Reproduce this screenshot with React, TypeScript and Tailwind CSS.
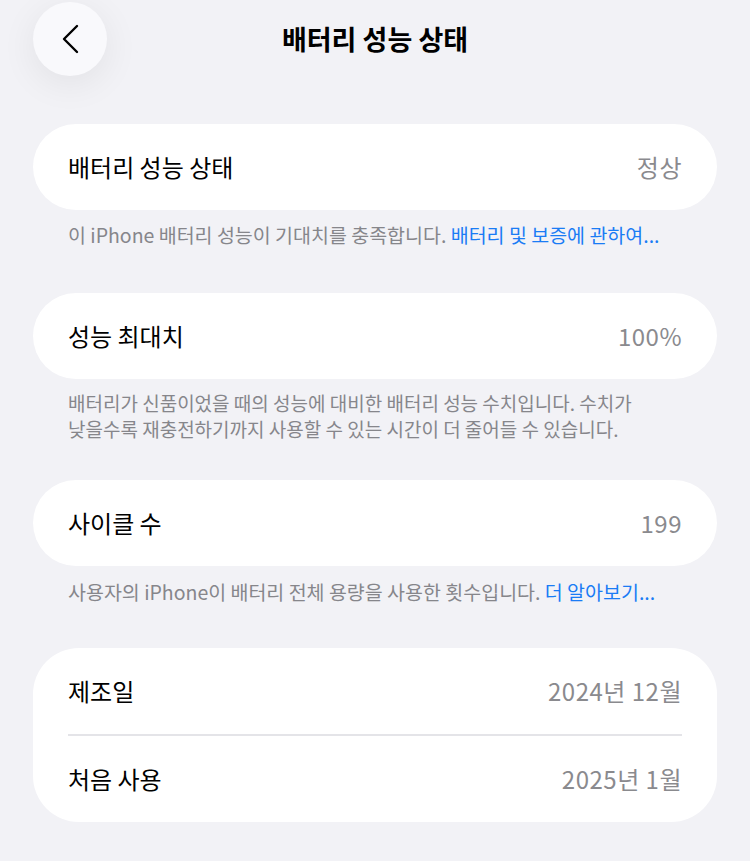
const font = {
  fontFamily: '"Noto Sans CJK KR", "Noto Sans", sans-serif',
};

function Row({ label, value }: { label: string; value: string }) {
  return (
    <div className="flex h-[86px] items-center justify-between px-[35px]">
      <span className="text-[24px] text-black">{label}</span>
      <span className="text-[24px] tracking-[0.5px] text-[#8a8a8e]">{value}</span>
    </div>
  );
}

export default function App() {
  return (
    <div
      className="min-h-[861px] w-[750px] bg-[#f2f2f6] pb-[39px]"
      style={font}
    >
      <div className="grid h-[78px] grid-cols-[1fr_auto_1fr] items-center">
        <div className="pl-[33px]">
          <button className="flex h-[74px] w-[74px] items-center justify-center rounded-full bg-[#f9f9fc] shadow-[0_8px_36px_rgba(0,0,0,0.07)]">
            <svg width="20" height="30" viewBox="0 0 20 30" fill="none">
              <path
                d="M17 2 L4 15 L17 28"
                stroke="black"
                strokeWidth="2.4"
                strokeLinecap="round"
                strokeLinejoin="round"
              />
            </svg>
          </button>
        </div>
        <h1 className="text-[27px] font-bold text-black">배터리 성능 상태</h1>
        <div />
      </div>

      <div className="mx-[33px] mt-[46px] rounded-full bg-white">
        <Row label="배터리 성능 상태" value="정상" />
      </div>
      <p className="mt-[13px] px-[68px] text-[19.5px] leading-[24px] text-[#86868b]">
        이 iPhone 배터리 성능이 기대치를 충족합니다.{" "}
        <span className="text-[#1a7cf5]">배터리 및 보증에 관하여...</span>
      </p>

      <div className="mx-[33px] mt-[46px] rounded-full bg-white">
        <Row label="성능 최대치" value="100%" />
      </div>
      <p className="mt-[11px] px-[68px] text-[19px] leading-[26px] text-[#86868b]">
        배터리가 신품이었을 때의 성능에 대비한 배터리 성능 수치입니다. 수치가
        <br />
        낮을수록 재충전하기까지 사용할 수 있는 시간이 더 줄어들 수 있습니다.
      </p>

      <div className="mx-[33px] mt-[38px] rounded-full bg-white">
        <Row label="사이클 수" value="199" />
      </div>
      <p className="mt-[14px] px-[68px] text-[19.5px] leading-[24px] text-[#86868b]">
        사용자의 iPhone이 배터리 전체 용량을 사용한 횟수입니다.{" "}
        <span className="text-[#1a7cf5]">더 알아보기...</span>
      </p>

      <div className="mx-[33px] mt-[44px] rounded-[46px] bg-white">
        <Row label="제조일" value="2024년 12월" />
        <div className="mx-[35px] h-[2px] bg-[#e4e4e8]" />
        <Row label="처음 사용" value="2025년 1월" />
      </div>
    </div>
  );
}
